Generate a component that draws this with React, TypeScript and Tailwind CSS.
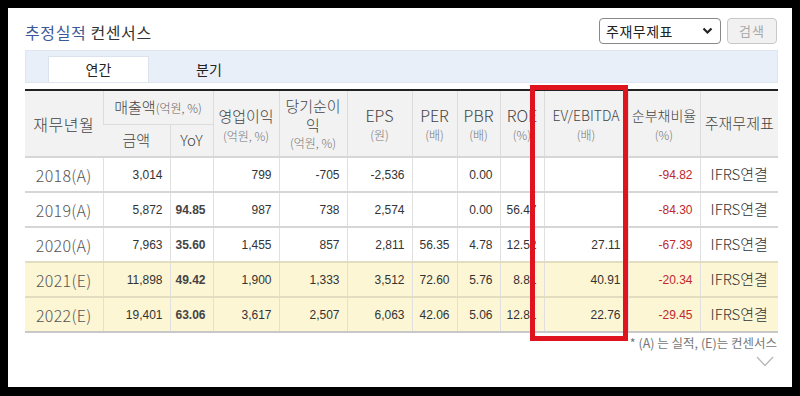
import React from "react";

const KR = { fontFamily: '"Noto Sans CJK KR", "Noto Sans", sans-serif' };
const NUM = { fontFamily: '"Liberation Sans", Arial, sans-serif' };

type Row = {
  year: string;
  est: boolean;
  sales: string;
  yoy: string;
  op: string;
  net: string;
  eps: string;
  per: string;
  pbr: string;
  roe: string;
  ev: string;
  debt: string;
};

const rows: Row[] = [
  { year: "2018(A)", est: false, sales: "3,014", yoy: "", op: "799", net: "-705", eps: "-2,536", per: "", pbr: "0.00", roe: "", ev: "", debt: "-94.82" },
  { year: "2019(A)", est: false, sales: "5,872", yoy: "94.85", op: "987", net: "738", eps: "2,574", per: "", pbr: "0.00", roe: "56.47", ev: "", debt: "-84.30" },
  { year: "2020(A)", est: false, sales: "7,963", yoy: "35.60", op: "1,455", net: "857", eps: "2,811", per: "56.35", pbr: "4.78", roe: "12.52", ev: "27.11", debt: "-67.39" },
  { year: "2021(E)", est: true, sales: "11,898", yoy: "49.42", op: "1,900", net: "1,333", eps: "3,512", per: "72.60", pbr: "5.76", roe: "8.81", ev: "40.91", debt: "-20.34" },
  { year: "2022(E)", est: true, sales: "19,401", yoy: "63.06", op: "3,617", net: "2,507", eps: "6,063", per: "42.06", pbr: "5.06", roe: "12.81", ev: "22.76", debt: "-29.45" },
];

const widths = [78, 67, 43, 66, 68, 65, 45, 43, 44, 84, 72, 78];

const Unit = ({ children }: { children: React.ReactNode }) => (
  <span className="block text-[12px] leading-[17px] text-[#777]">{children}</span>
);

export default function App() {
  const th = "border-l border-[#dcdcdc] first:border-l-0 font-light text-[#444] bg-[#f2f2f2] align-middle p-0";
  const td = "border-l border-[#e0e0e0] first:border-l-0 text-right pr-[7px] text-[12px] text-[#333]";
  return (
    <div className="w-[800px] h-[396px] bg-black pt-[8px] pl-[8px]">
      <div className="relative w-[784px] h-[379px] bg-white pl-[17px] pr-[14px]" style={KR}>
        <div className="flex items-center justify-between pt-[10px] h-[36px]">
          <h2 className="text-[16px] leading-[26px] mt-[2px] tracking-[0.6px]">
            <span className="text-[#3b5998]">추정실적</span>{" "}
            <span className="text-[#333]">컨센서스</span>
          </h2>
          <div className="flex items-center gap-[6px] mr-[1px]">
            <div className="flex items-center justify-between w-[122px] h-[26px] border border-[#888] rounded-[4px] pl-[6px] pr-[7px] text-[14px] text-[#222]">
              <span className="tracking-[0.5px]">주재무제표</span>
              <svg width="11" height="8" viewBox="0 0 11 8">
                <path d="M1.5 1.5 L5.5 5.5 L9.5 1.5" fill="none" stroke="#222" strokeWidth="2.2" />
              </svg>
            </div>
            <div className="flex items-center justify-center w-[50px] h-[26px] border border-[#c8c8c8] rounded-[4px] bg-[#f1f1f1] text-[13px] text-[#a8a8a8] tracking-[1px]">
              검색
            </div>
          </div>
        </div>

        <div className="mt-[6px] h-[33px] bg-[#e9eff8] border border-[#dfe6f1] flex items-end pl-[22px]">
          <div className="w-[101px] h-[26px] bg-white border border-b-0 border-[#dbe2ee] flex items-center justify-center text-[14px] text-[#222]">
            연간
          </div>
          <div className="w-[120px] h-[26px] flex items-center justify-center text-[14px] text-[#222]">
            분기
          </div>
        </div>

        <table className="mt-[6px] border-collapse table-fixed w-[753px] border-t-2 border-t-[#222]">
          <colgroup>
            {widths.map((w, i) => (
              <col key={i} style={{ width: w }} />
            ))}
          </colgroup>
          <thead>
            <tr className="h-[34px]">
              <th rowSpan={2} className={th + " text-[16px] tracking-[0.5px]"}>재무년월</th>
              <th colSpan={2} className={th + " text-[15px] border-b border-[#dcdcdc]"}>
                매출액<span className="text-[12px] text-[#666]">(억원, %)</span>
              </th>
              <th rowSpan={2} className={th + " text-[15px] leading-[22px] pt-[2px]"}>
                영업이익
                <Unit>(억원, %)</Unit>
              </th>
              <th rowSpan={2} className={th + " text-[15px] leading-[19px]"}>
                당기순이
                <br />익
                <Unit>(억원, %)</Unit>
              </th>
              <th rowSpan={2} className={th + " text-[16px] leading-[22px]"}>
                EPS
                <Unit>(원)</Unit>
              </th>
              <th rowSpan={2} className={th + " text-[16px] leading-[22px]"}>
                PER
                <Unit>(배)</Unit>
              </th>
              <th rowSpan={2} className={th + " text-[16px] leading-[22px]"}>
                PBR
                <Unit>(배)</Unit>
              </th>
              <th rowSpan={2} className={th + " text-[16px] leading-[22px]"}>
                ROE
                <Unit>(%)</Unit>
              </th>
              <th rowSpan={2} className={th + " text-[14px] leading-[21px]"}>
                EV/EBITDA
                <Unit>(배)</Unit>
              </th>
              <th rowSpan={2} className={th + " text-[14px] leading-[21px]"}>
                순부채비율
                <Unit>(%)</Unit>
              </th>
              <th rowSpan={2} className={th + " text-[15px]"}>주재무제표</th>
            </tr>
            <tr className="h-[33px]">
              <th className={th + " border-l-0 text-[15px]"}>금액</th>
              <th className={th + " text-[15px]"}>YoY</th>
            </tr>
          </thead>
          <tbody>
            {rows.map((r) => (
              <tr
                key={r.year}
                className={
                  "h-[35px] border-t-2 " +
                  (r.est ? "bg-[#fcf6d5] border-t-[#e2dcc0]" : "bg-white border-t-[#d6d6d6]")
                }
              >
                <td className="text-center text-[16px] font-light text-[#555] tracking-[0.3px]">{r.year}</td>
                <td className={td} style={NUM}>{r.sales}</td>
                <td className={td + " font-bold text-[#444]"} style={NUM}>{r.yoy}</td>
                <td className={td} style={NUM}>{r.op}</td>
                <td className={td} style={NUM}>{r.net}</td>
                <td className={td} style={NUM}>{r.eps}</td>
                <td className={td} style={NUM}>{r.per}</td>
                <td className={td} style={NUM}>{r.pbr}</td>
                <td className={td} style={NUM}>{r.roe}</td>
                <td className={td} style={NUM}>{r.ev}</td>
                <td className={td + " text-[#c0282d]"} style={NUM}>{r.debt}</td>
                <td className="border-l border-[#e0e0e0] text-center text-[15px] font-light text-[#333]">IFRS연결</td>
              </tr>
            ))}
            <tr className="h-0 border-t-2 border-t-[#c8c8c8]" />
          </tbody>
        </table>

        <div className="flex flex-col items-end pr-[1px]">
          <p className="mt-[3px] text-[12.5px] leading-[16px] text-[#777]">* (A) 는 실적, (E)는 컨센서스</p>
          <svg className="mt-[5px] mr-[3px]" width="18" height="11" viewBox="0 0 18 11">
            <path d="M1 1 L9 9.5 L17 1" fill="none" stroke="#b9b9b9" strokeWidth="1.4" />
          </svg>
        </div>

        <div className="absolute left-[522px] top-[77px] w-[98px] h-[256px] border-[5px] border-[#e0141e]" />
      </div>
    </div>
  );
}
